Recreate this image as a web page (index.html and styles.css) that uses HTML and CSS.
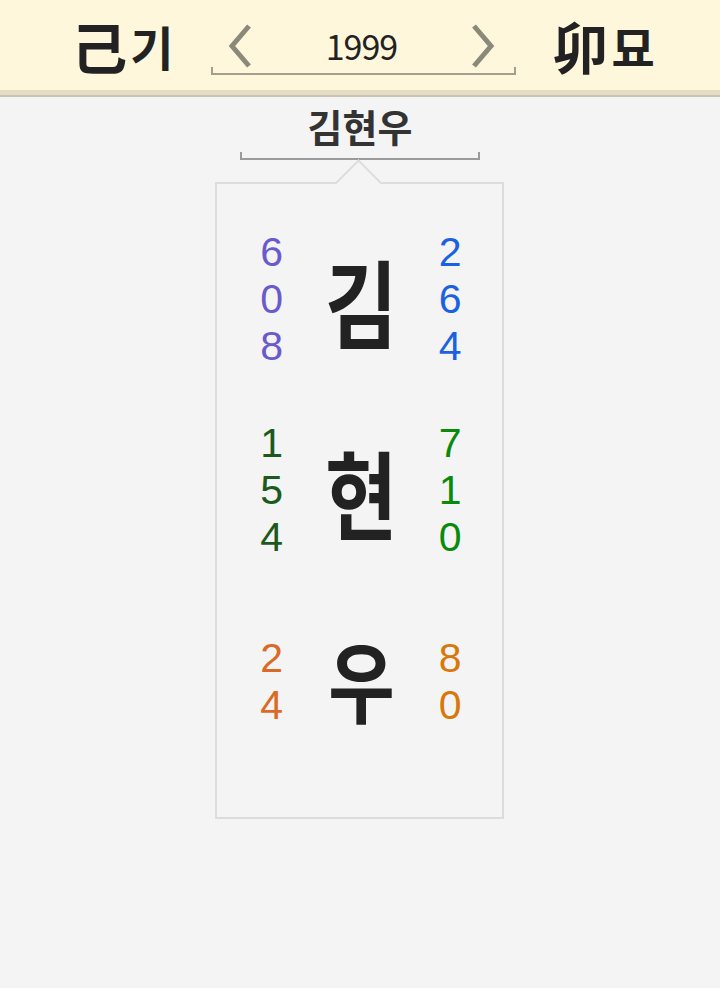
FILE: index.html
```html
<!DOCTYPE html>
<html lang="ko">
<head>
    <meta charset="UTF-8">
    <meta name="viewport" content="width=device-width, initial-scale=1.0">
    <title>이름 풀이</title>
    <link rel="stylesheet" href="styles.css">
</head>
<body>
    <!-- Header: year picker -->
    <div class="header">
        <div class="ganji">
            <span class="hanja">己</span><span class="hangul">기</span>
        </div>
        <div class="year-box">
            <button class="arrow" aria-label="이전">
                <svg width="24" height="46" viewBox="0 0 24 46"><polyline points="21,3 4,23 21,43" fill="none" stroke="#8b897a" stroke-width="5"/></svg>
            </button>
            <div class="year">1999</div>
            <button class="arrow" aria-label="다음">
                <svg width="24" height="46" viewBox="0 0 24 46"><polyline points="3,3 20,23 3,43" fill="none" stroke="#8b897a" stroke-width="5"/></svg>
            </button>
        </div>
        <div class="ganji">
            <span class="hanja">卯</span><span class="hangul">묘</span>
        </div>
    </div>

    <!-- Name -->
    <div class="main">
        <div class="name-label">김현우</div>
        <div class="card">
            <div class="row">
                <div class="nums c1"><div>6</div><div>0</div><div>8</div></div>
                <div class="char">김</div>
                <div class="nums c2"><div>2</div><div>6</div><div>4</div></div>
            </div>
            <div class="row">
                <div class="nums c3"><div>1</div><div>5</div><div>4</div></div>
                <div class="char">현</div>
                <div class="nums c4"><div>7</div><div>1</div><div>0</div></div>
            </div>
            <div class="row">
                <div class="nums c5"><div>2</div><div>4</div></div>
                <div class="char char-sm">우</div>
                <div class="nums c6"><div>8</div><div>0</div></div>
            </div>
        </div>
    </div>
</body>
</html>
```
FILE: styles.css
```css
* {
    margin: 0;
    padding: 0;
    box-sizing: border-box;
    font-family: 'Noto Sans CJK KR', 'Noto Sans', sans-serif;
}

body {
    background: #f4f4f4;
    color: #222;
    min-height: 100vh;
}

/* Header */
.header {
    height: 95px;
    background: #fff7dc;
    border-bottom: 5px solid #e4ddc3;
    box-shadow: 0 2px 0 #c9c5b5;
    display: flex;
    justify-content: center;
    align-items: center;
    gap: 37px;
    padding-left: 6px;
}

.ganji {
    display: flex;
    align-items: center;
    gap: 3px;
    font-weight: 700;
    color: #222;
}

.ganji .hanja {
    font-size: 56px;
    line-height: 1;
}

.ganji .hangul {
    font-size: 47px;
    line-height: 1;
}

.year-box {
    width: 305px;
    height: 48px;
    margin-top: 12px;
    border: 2px solid #a29f8c;
    border-top: none;
    display: flex;
    justify-content: space-between;
    align-items: flex-end;
    padding: 0 18px 4px 15px;
    position: relative;
}

.year-box::before {
    content: "";
    position: absolute;
    left: -2px;
    right: -2px;
    top: 0;
    bottom: 6px;
    background: #fff7dc;
}

.arrow {
    background: none;
    border: none;
    position: relative;
    z-index: 1;
    height: 46px;
    cursor: pointer;
}

.year {
    position: relative;
    z-index: 1;
    font-size: 34px;
    line-height: 46px;
    color: #222;
    letter-spacing: -1px;
}

/* Name card */
.main {
    display: flex;
    flex-direction: column;
    align-items: center;
    padding-top: 6px;
}

.name-label {
    position: relative;
    z-index: 0;
    width: 240px;
    height: 59px;
    text-align: center;
    font-size: 38px;
    font-weight: 700;
    line-height: 49px;
    color: #333;
    border: 2px solid #9a9a9a;
    border-top: none;
}

.name-label::before {
    content: "";
    position: absolute;
    left: -2px;
    right: -2px;
    top: 0;
    bottom: 6px;
    background: #f4f4f4;
    z-index: -1;
}

.card {
    position: relative;
    width: 289px;
    margin-top: 22px;
    margin-left: -2px;
    border: 2px solid #dcdcdc;
    padding: 20px 12px 40px 16px;
}

.card::before {
    content: "";
    position: absolute;
    top: -18px;
    left: 125px;
    width: 31px;
    height: 31px;
    background: #f4f4f4;
    border-top: 2px solid #dcdcdc;
    border-left: 2px solid #dcdcdc;
    transform: rotate(45deg);
}

.row {
    height: 191px;
    display: grid;
    grid-template-columns: 1fr 100px 1fr;
    align-items: center;
    justify-items: center;
}

.char {
    font-size: 96px;
    font-weight: 700;
    line-height: 1;
    color: #222;
    transform: scaleX(0.82);
}

.char-sm {
    font-size: 88px;
    margin-top: -8px;
}

.nums {
    font-size: 41px;
    line-height: 47px;
    text-align: center;
}

.nums div {
    height: 47px;
    font-family: 'Liberation Sans', Arial, sans-serif;
}

.c1 { color: #6a5acd; }
.c2 { color: #1a62e0; }
.c3 { color: #1b5a1b; }
.c4 { color: #0a8a0a; }
.c5 { color: #da6a26; }
.c6 { color: #d9780a; }
```
